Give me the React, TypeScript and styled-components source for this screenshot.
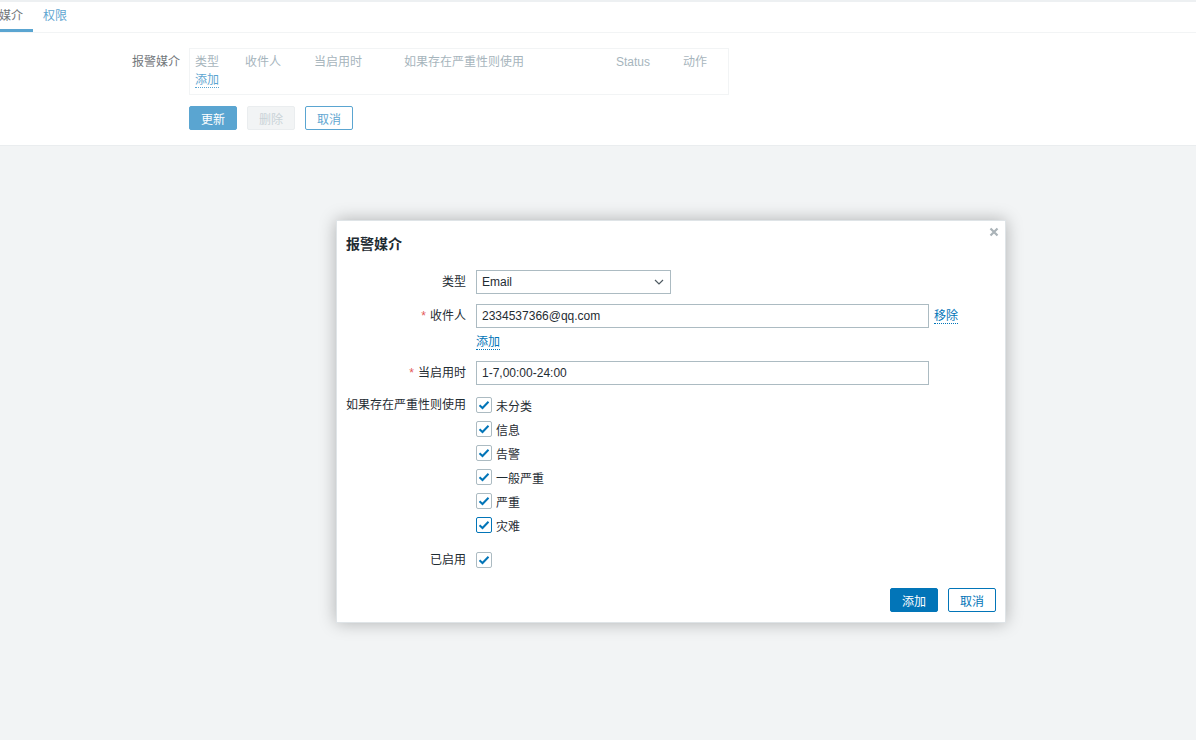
import React from "react";
import styled, { createGlobalStyle } from "styled-components";

const GlobalStyle = createGlobalStyle`
  html, body {
    margin: 0;
    padding: 0;
    background: #ebeef0;
    font-family: "Liberation Sans", "Noto Sans CJK SC", sans-serif;
    font-size: 12px;
    color: #1f2c33;
  }
  * { box-sizing: border-box; }
`;

const Screen = styled.div`
  position: relative;
  width: 1196px;
  height: 740px;
  overflow: hidden;
  background: #ebeef0;
`;

const Page = styled.div`
  background: #fff;
  border-top: 2px solid #e4e8eb;
  border-bottom: 1px solid #dfe4e7;
`;

const Tabs = styled.div`
  display: flex;
  height: 31px;
  border-bottom: 1px solid #ebeef0;
  margin-left: -11px;
`;

const Tab = styled.div<{ $active?: boolean }>`
  padding: 0 10px;
  line-height: 28px;
  color: ${(p) => (p.$active ? "#1f2c33" : "#0275b8")};
  border-bottom: 3px solid ${(p) => (p.$active ? "#0275b8" : "transparent")};
`;

const FormGrid = styled.div`
  display: grid;
  grid-template-columns: 180px 540px;
  column-gap: 9px;
  padding: 15px 0 15px 0;
`;

const FieldLabel = styled.div`
  text-align: right;
  padding-top: 5px;
  line-height: 18px;
`;

const MediaTable = styled.div`
  border: 1px solid #ebeef0;
  padding: 4px 5px 5px;
  display: grid;
  grid-template-columns: 50px 69px 90px 212px 67px 1fr;
  line-height: 18px;
`;

const Th = styled.div`
  color: #768d99;
`;

const Link = styled.span`
  color: #0275b8;
  border-bottom: 1px dotted #0275b8;
  line-height: 14px;
  display: inline-block;
  cursor: pointer;
`;

const ButtonRow = styled.div`
  grid-column: 2;
  display: flex;
  gap: 10px;
  margin-top: 11px;
`;

const Button = styled.button<{ $variant?: "primary" | "outline" | "disabled" }>`
  height: 24px;
  padding: 0 11px;
  font: inherit;
  border-radius: 2px;
  border: 1px solid
    ${(p) =>
      p.$variant === "disabled" ? "#dfe4e7" : "#0275b8"};
  background: ${(p) =>
    p.$variant === "primary"
      ? "#0275b8"
      : p.$variant === "disabled"
      ? "#ebeef0"
      : "#fff"};
  color: ${(p) =>
    p.$variant === "primary"
      ? "#fff"
      : p.$variant === "disabled"
      ? "#acbbc2"
      : "#0275b8"};
`;

const Overlay = styled.div`
  position: absolute;
  inset: 0;
  background: rgba(255, 255, 255, 0.35);
`;

const Dialog = styled.div`
  position: absolute;
  left: 336px;
  top: 220px;
  width: 670px;
  background: #fff;
  border: 1px solid #dfe4e7;
  box-shadow: 0 0 16px rgba(0, 0, 0, 0.28);
  padding-bottom: 10px;
`;

const DialogHead = styled.div`
  height: 43px;
  display: flex;
  align-items: center;
  padding: 0 9px;
  font-size: 14px;
  font-weight: bold;
  color: #1f2c33;
`;

const Close = styled.svg`
  position: absolute;
  top: 6px;
  right: 6px;
`;

const DialogBody = styled.div`
  padding: 6px 9px 0;
`;

const Row = styled.div<{ $gap?: number }>`
  display: grid;
  grid-template-columns: 120px 1fr;
  column-gap: 10px;
  margin-bottom: ${(p) => p.$gap ?? 10}px;
`;

const Label = styled.div`
  text-align: right;
  line-height: 24px;
  white-space: nowrap;
`;

const Req = styled.span`
  color: #e45959;
  margin-right: 4px;
`;

const Select = styled.div`
  width: 195px;
  height: 24px;
  border: 1px solid #acbbc2;
  display: flex;
  align-items: center;
  justify-content: space-between;
  padding: 0 6px 0 5px;
  font-size: 12px;
`;

const InputLine = styled.div`
  display: flex;
  align-items: center;
  gap: 5px;
`;

const Input = styled.div`
  width: 453px;
  height: 24px;
  border: 1px solid #acbbc2;
  padding: 0 5px;
  line-height: 22px;
  font-size: 12px;
`;

const SubLink = styled.div`
  margin-top: 6px;
  line-height: 16px;
`;

const CheckList = styled.div`
  display: flex;
  flex-direction: column;
`;

const CheckItem = styled.div`
  height: 24px;
  display: flex;
  align-items: center;
  gap: 4px;
`;

const Box = styled.span<{ $focus?: boolean }>`
  width: 16px;
  height: 16px;
  border: 1px solid ${(p) => (p.$focus ? "#0275b8" : "#acbbc2")};
  border-radius: 2px;
  display: inline-flex;
  align-items: center;
  justify-content: center;
  background: #fff;
`;

const Footer = styled.div`
  display: flex;
  justify-content: flex-end;
  gap: 10px;
  margin-top: 16px;
`;

const Check = ({ focus }: { focus?: boolean }) => (
  <Box $focus={focus}>
    <svg width="12" height="10" viewBox="0 0 12 10">
      <path d="M1.5 5.2 L4.5 8 L10.5 1.8" fill="none" stroke="#0275b8" strokeWidth="2" />
    </svg>
  </Box>
);

const severities = ["未分类", "信息", "告警", "一般严重", "严重", "灾难"];

const App = () => {
  return (
    <Screen>
      <GlobalStyle />
      <Page>
        <Tabs>
          <Tab $active>媒介</Tab>
          <Tab>权限</Tab>
        </Tabs>
        <FormGrid>
          <FieldLabel>报警媒介</FieldLabel>
          <MediaTable>
            <Th>类型</Th>
            <Th>收件人</Th>
            <Th>当启用时</Th>
            <Th>如果存在严重性则使用</Th>
            <Th>Status</Th>
            <Th>动作</Th>
            <div>
              <Link>添加</Link>
            </div>
          </MediaTable>
          <ButtonRow>
            <Button $variant="primary">更新</Button>
            <Button $variant="disabled">删除</Button>
            <Button $variant="outline">取消</Button>
          </ButtonRow>
        </FormGrid>
      </Page>
      <Overlay />
      <Dialog>
        <DialogHead>报警媒介</DialogHead>
        <Close width="10" height="10" viewBox="0 0 10 10">
          <path d="M1.5 1.5 L8.5 8.5 M8.5 1.5 L1.5 8.5" stroke="#aab3b8" strokeWidth="2.2" />
        </Close>
        <DialogBody>
          <Row>
            <Label>类型</Label>
            <Select>
              <span>Email</span>
              <svg width="10" height="6" viewBox="0 0 10 6">
                <path d="M1 1 L5 5 L9 1" fill="none" stroke="#4f5b62" strokeWidth="1.2" />
              </svg>
            </Select>
          </Row>
          <Row $gap={11}>
            <Label>
              <Req>*</Req>收件人
            </Label>
            <div>
              <InputLine>
                <Input>2334537366@qq.com</Input>
                <Link>移除</Link>
              </InputLine>
              <SubLink>
                <Link>添加</Link>
              </SubLink>
            </div>
          </Row>
          <Row $gap={8}>
            <Label>
              <Req>*</Req>当启用时
            </Label>
            <Input>1-7,00:00-24:00</Input>
          </Row>
          <Row $gap={11}>
            <Label>如果存在严重性则使用</Label>
            <CheckList>
              {severities.map((s, i) => (
                <CheckItem key={s}>
                  <Check focus={i === severities.length - 1} />
                  <span>{s}</span>
                </CheckItem>
              ))}
            </CheckList>
          </Row>
          <Row $gap={0}>
            <Label>已启用</Label>
            <CheckItem>
              <Check />
            </CheckItem>
          </Row>
          <Footer>
            <Button $variant="primary">添加</Button>
            <Button $variant="outline">取消</Button>
          </Footer>
        </DialogBody>
      </Dialog>
    </Screen>
  );
};

export default App;
